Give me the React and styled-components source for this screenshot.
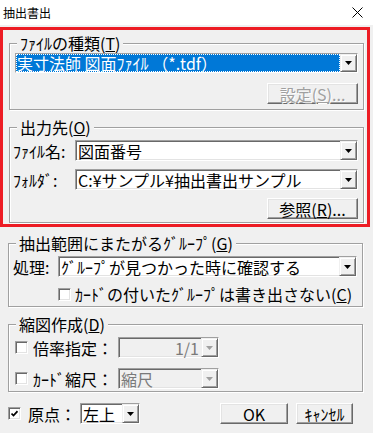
import React from "react"
import styled, { createGlobalStyle } from "styled-components"

const GlobalStyle = createGlobalStyle`
  html, body {
    margin: 0;
    padding: 0;
    background: #f0f0f0;
  }
  body {
    font-family: "Noto Sans CJK JP", "Noto Sans", sans-serif;
    font-size: 16px;
    color: #000;
  }
`

const Dialog = styled.div`
  width: 373px;
  height: 433px;
  background: #f0f0f0;
  overflow: hidden;
`

const TitleBar = styled.div`
  height: 25px;
  background: #fff;
  display: flex;
  align-items: center;
  justify-content: space-between;
  padding: 0 10px 0 3px;
  box-sizing: border-box;
`

const Title = styled.span`
  font-size: 12px;
  line-height: 16px;
`

const Body = styled.div`
  padding-top: 2px;
`

const Highlight = styled.div`
  border: 3px solid #ed1c24;
  margin-right: 3px;
  padding: 5px 3px 1px 6px;
`

const Group = styled.fieldset`
  margin: ${p => p.$top || 0}px ${p => p.$right || 0}px 0 ${p => p.$left || 0}px;
  padding: 0;
  border: 1px solid #a0a0a0;
  box-shadow: inset 1px 1px 0 #fff, 1px 1px 0 #fff;
  min-width: 0;
`

const Legend = styled.legend`
  margin-left: 7px;
  padding: 0 3px;
  font-size: 16px;
  line-height: 16px;
  background: #f0f0f0;
  white-space: nowrap;
`

const GroupBody = styled.div`
  padding: ${p => p.$pad};
  display: flex;
  flex-direction: column;
  gap: ${p => p.$gap || 0}px;
`

const Row = styled.div`
  display: flex;
  align-items: center;
  height: 21px;
  justify-content: ${p => (p.$end ? "flex-end" : "flex-start")};
`

const Label = styled.span`
  width: ${p => p.$w}px;
  flex: none;
  font-size: 16px;
  line-height: 18px;
  white-space: nowrap;
`

const Combo = styled.div`
  display: flex;
  height: 21px;
  box-sizing: border-box;
  width: ${p => (p.$w ? `${p.$w}px` : "auto")};
  flex: ${p => (p.$w ? "none" : "1")};
  margin-left: ${p => p.$ml || 0}px;
  background: ${p => (p.$disabled ? "#f0f0f0" : "#fff")};
  border: 1px solid;
  border-color: #a0a0a0 #fff #fff #a0a0a0;
  box-shadow: inset 1px 1px 0 #696969, inset -1px -1px 0 #e3e3e3;
`

const Field = styled.span`
  flex: 1;
  min-width: 0;
  display: flex;
  align-items: center;
  justify-content: ${p => (p.$right ? "flex-end" : "flex-start")};
  padding: ${p => (p.$right ? "0 2px 0 0" : "0 0 0 1px")};
  margin: ${p => (p.$selected ? "0" : "1px 0 0 1px")};
  white-space: nowrap;
  font-size: 16px;
  line-height: 18px;
  color: ${p => (p.$selected ? "#fff" : p.$disabled ? "#7a7a7a" : "#000")};
  background: ${p => (p.$selected ? "#0078d7" : "transparent")};
  outline: ${p => (p.$selected ? "1px dotted #fff" : "none")};
  outline-offset: -1px;
`

const DropButton = styled.span`
  width: 17px;
  flex: none;
  box-sizing: border-box;
  background: #f0f0f0;
  border: 1px solid;
  border-color: #f0f0f0 #696969 #696969 #f0f0f0;
  box-shadow: inset 1px 1px 0 #fff, inset -1px -1px 0 #a0a0a0;
  display: flex;
  align-items: center;
  justify-content: center;
`

const Button = styled.button`
  width: ${p => p.$w}px;
  height: 21px;
  box-sizing: border-box;
  padding: 0;
  margin-left: ${p => (p.$auto ? "auto" : "0")};
  background: #f0f0f0;
  border: 1px solid;
  border-color: #fff #696969 #696969 #fff;
  box-shadow: inset -1px -1px 0 #a0a0a0, inset 1px 1px 0 #e3e3e3;
  font-family: inherit;
  font-size: 16px;
  line-height: 18px;
  color: ${p => (p.disabled ? "#a0a0a0" : "#000")};
  text-shadow: ${p => (p.disabled ? "1px 1px 0 #fff" : "none")};
  white-space: nowrap;
`

const CheckRow = styled.div`
  display: flex;
  align-items: center;
  gap: ${p => p.$gap || 4}px;
  height: 16px;
  margin: ${p => p.$margin || 0};
  font-size: 16px;
  line-height: 18px;
  white-space: nowrap;
`

const Box = styled.span`
  width: 13px;
  height: 13px;
  flex: none;
  box-sizing: border-box;
  background: #fff;
  border: 1px solid;
  border-color: #a0a0a0 #fff #fff #a0a0a0;
  box-shadow: inset 1px 1px 0 #696969, inset -1px -1px 0 #e3e3e3;
  display: flex;
  align-items: center;
  justify-content: center;
`

const BottomRow = styled.div`
  display: flex;
  align-items: center;
  margin-top: 11px;
  padding: 0 20px 0 8px;
  gap: 8px;
`

const OriginGroup = styled.div`
  display: flex;
  align-items: center;
  gap: 4px;
`

const Arrow = ({ disabled }) => (
  <svg width="7" height="4" viewBox="0 0 7 4">
    <polygon points="0,0 7,0 3.5,4" fill={disabled ? "#a0a0a0" : "#000"} />
  </svg>
)

const ComboBox = ({ text, w, ml, selected, disabled, right }) => (
  <Combo $w={w} $ml={ml} $disabled={disabled}>
    <Field $selected={selected} $disabled={disabled} $right={right}>
      {text}
    </Field>
    <DropButton>
      <Arrow disabled={disabled} />
    </DropButton>
  </Combo>
)

const CheckBox = ({ checked }) => (
  <Box>
    {checked && (
      <svg width="7" height="7" viewBox="0 0 7 7">
        <polyline points="0.5,3.5 2.5,5.5 6.5,1.2" fill="none" stroke="#000" strokeWidth="1.7" />
      </svg>
    )}
  </Box>
)

const CloseIcon = () => (
  <svg width="11" height="11" viewBox="0 0 11 11">
    <path d="M0.5 0.5 L10.5 10.5 M10.5 0.5 L0.5 10.5" stroke="#000" strokeWidth="1" />
  </svg>
)

export default function App() {
  return (
    <Dialog>
      <GlobalStyle />
      <TitleBar>
        <Title>抽出書出</Title>
        <CloseIcon />
      </TitleBar>
      <Body>
        <Highlight>
          <Group>
            <Legend>ﾌｧｲﾙの種類(<u>T</u>)</Legend>
            <GroupBody $pad="2px 5px 5px 5px" $gap={10}>
              <ComboBox text="実寸法師 図面ﾌｧｲﾙ （*.tdf）" selected />
              <Row $end>
                <Button $w={91} disabled>
                  設定(<u>S</u>)...
                </Button>
              </Row>
            </GroupBody>
          </Group>
          <Group $top={9}>
            <Legend>出力先(<u>O</u>)</Legend>
            <GroupBody $pad="5px 5px 3px 3px" $gap={8}>
              <Row>
                <Label $w={62}>ﾌｧｲﾙ名:</Label>
                <ComboBox text="図面番号" />
              </Row>
              <Row>
                <Label $w={62}>ﾌｫﾙﾀﾞ:</Label>
                <ComboBox text="C:¥サンプル¥抽出書出サンプル" />
              </Row>
              <Row $end>
                <Button $w={91}>
                  参照(<u>R</u>)...
                </Button>
              </Row>
            </GroupBody>
          </Group>
        </Highlight>

        <Group $top={8} $left={8} $right={10}>
          <Legend>抽出範囲にまたがるｸﾞﾙｰﾌﾟ(<u>G</u>)</Legend>
          <GroupBody $pad="5px 5px 4px 4px">
            <Row>
              <Label $w={45}>処理:</Label>
              <ComboBox text="ｸﾞﾙｰﾌﾟが見つかった時に確認する" />
            </Row>
            <CheckRow $margin="9px 0 0 45px">
              <CheckBox />
              <span>
                ｶｰﾄﾞの付いたｸﾞﾙｰﾌﾟは書き出さない(<u>C</u>)
              </span>
            </CheckRow>
          </GroupBody>
        </Group>

        <Group $top={9} $left={8} $right={10}>
          <Legend>縮図作成(<u>D</u>)</Legend>
          <GroupBody $pad="5px 5px 2px 6px" $gap={10}>
            <Row>
              <CheckRow $gap={5}>
                <CheckBox />
                <Label $w={80}>倍率指定：</Label>
              </CheckRow>
              <ComboBox text="1/1" w={101} ml={5} disabled right />
            </Row>
            <Row>
              <CheckRow $gap={5}>
                <CheckBox />
                <Label $w={80}>ｶｰﾄﾞ縮尺：</Label>
              </CheckRow>
              <ComboBox text="縮尺" w={101} ml={5} disabled />
            </Row>
          </GroupBody>
        </Group>

        <BottomRow>
          <OriginGroup>
            <CheckRow $gap={7}>
              <CheckBox checked />
              <Label $w={48}>原点：</Label>
            </CheckRow>
            <ComboBox text="左上" w={60} />
          </OriginGroup>
          <Button $w={68} $auto>
            OK
          </Button>
          <Button $w={57}>ｷｬﾝｾﾙ</Button>
        </BottomRow>
      </Body>
    </Dialog>
  )
}
